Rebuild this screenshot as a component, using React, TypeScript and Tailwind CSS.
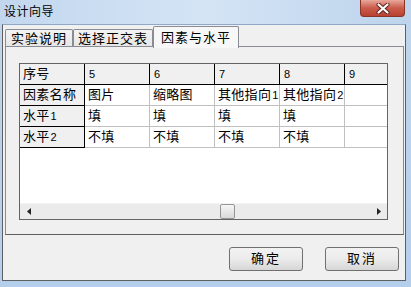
import React from "react"

const cjk = "font-['Liberation_Sans','Noto_Sans_CJK_SC',sans-serif]"

const cols = ["5", "6", "7", "8", "9"]
const rows = [
  { head: "因素名称", cells: ["图片", "缩略图", "其他指向1", "其他指向2", ""] },
  { head: "水平1", cells: ["填", "填", "填", "填", ""] },
  { head: "水平2", cells: ["不填", "不填", "不填", "不填", ""] },
]

// digits are drawn in a smaller face than the CJK glyphs
function Txt({ text }: { text: string }) {
  const parts = text.split(/(\d+)/)
  return (
    <>
      {parts.map((p, i) =>
        /^\d+$/.test(p) ? (
          <span key={i} className="text-[11px] ml-[1px]">
            {p}
          </span>
        ) : (
          <span key={i}>{p}</span>
        )
      )}
    </>
  )
}

function Cell({ text, fixed, last }: { text: string; fixed?: boolean; last?: boolean }) {
  return (
    <div
      className={
        "h-[21px] flex items-center pl-[3px] overflow-hidden whitespace-nowrap text-[13px] tracking-[0.3px] text-black " +
        (last ? "w-[42px] " : "w-[65px] border-r ") +
        (fixed ? "bg-[#f0f0f0] border-b border-black " : "bg-white border-b border-[#c0c0c0] ") +
        (fixed ? "border-r-black" : "border-r-[#c0c0c0]")
      }
    >
      <Txt text={text} />
    </div>
  )
}

function Tab({ label, selected, w }: { label: string; selected?: boolean; w: string }) {
  return (
    <div
      className={
        "flex items-center justify-center border border-b-0 border-[#898c95] text-[13px] tracking-[1px] text-black " +
        w +
        (selected
          ? " h-[22px] mt-[1px] bg-[#f7f7f7] rounded-t-[2px] z-10 -mb-px"
          : " h-[18px] mt-[4px] bg-gradient-to-b from-[#f3f3f3] to-[#e6e6e6] rounded-t-[2px]")
      }
    >
      {label}
    </div>
  )
}

function Button({ label }: { label: string }) {
  return (
    <button className="w-[74px] h-[24px] rounded-[3px] border border-[#707070] bg-gradient-to-b from-[#f2f2f2] via-[#ebebeb] to-[#d6d6d6] text-[13px] tracking-[2px] text-black">
      {label}
    </button>
  )
}

export default function App() {
  return (
    <div className={"w-[411px] h-[287px] flex flex-col bg-gradient-to-b from-[#c0d6ee] to-[#b4cfec] " + cjk}>
      {/* title bar */}
      <div className="h-[24px] flex items-start justify-between bg-gradient-to-r from-[#c2d7ee] via-[#d4e4f5] to-[#bdd4ec]">
        <span className="mt-[5px] ml-[4px] text-[12px] tracking-[0.5px] text-black leading-[14px]">设计向导</span>
        <div className="mr-[6px] w-[45px] h-[17px] rounded-b-[4px] border border-t-0 border-[#8a3428] bg-gradient-to-b from-[#e8a89c] via-[#c95b4b] to-[#b84130] flex items-center justify-center">
          <svg width="14" height="11" viewBox="0 0 14 11">
            <path d="M2.5 1.5 L11.5 9.5 M11.5 1.5 L2.5 9.5" stroke="#5a2019" strokeWidth="4" strokeLinecap="round" />
            <path d="M2.5 1.5 L11.5 9.5 M11.5 1.5 L2.5 9.5" stroke="#ffffff" strokeWidth="2.2" strokeLinecap="round" />
          </svg>
        </div>
      </div>

      {/* client area */}
      <div className="ml-[2px] w-[404px] h-[257px] flex flex-col bg-[#f0f0f0] border border-t-[#8ea9c8] border-[#5f5f5f]">
        {/* tab strip */}
        <div className="h-[21px] flex pl-[2px]">
          <Tab label="实验说明" w="w-[68px]" />
          <Tab label="选择正交表" w="w-[80px]" />
          <Tab label="因素与水平" w="w-[86px]" selected />
        </div>

        {/* tab page */}
        <div className="ml-[2px] w-[399px] h-[189px] border border-[#898c95] border-b-[#5f5f5f] bg-[#f0f0f0] pl-[13px] pt-[16px]">
          <div className="w-[369px] h-[157px] border border-[#646464] bg-white flex flex-col">
            <div className="flex">
              <Cell text="序号" fixed />
              {cols.map((c, i) => (
                <Cell key={c} text={c} fixed last={i === cols.length - 1} />
              ))}
            </div>
            {rows.map((r) => (
              <div key={r.head} className="flex">
                <Cell text={r.head} fixed />
                {r.cells.map((c, i) => (
                  <Cell key={i} text={c} last={i === r.cells.length - 1} />
                ))}
              </div>
            ))}
            <div className="flex-1" />
            {/* horizontal scrollbar */}
            <div className="h-[16px] flex items-center bg-[#ebebeb] border-t border-t-[#f4f4f4]">
              <div className="w-[17px] flex items-center justify-center">
                <svg width="4" height="7" viewBox="0 0 4 7">
                  <path d="M4 0 L0 3.5 L4 7 Z" fill="#222" />
                </svg>
              </div>
              <div className="flex-1 flex items-center">
                <div className="ml-[183px] w-[15px] h-[15px] rounded-[2px] border border-[#959595] bg-gradient-to-b from-[#f6f6f6] to-[#d9d9d9]" />
              </div>
              <div className="w-[17px] flex items-center justify-center">
                <svg width="4" height="7" viewBox="0 0 4 7">
                  <path d="M0 0 L4 3.5 L0 7 Z" fill="#222" />
                </svg>
              </div>
            </div>
          </div>
        </div>

        {/* buttons */}
        <div className="flex justify-end gap-[22px] pr-[6px] pt-[12px]">
          <Button label="确定" />
          <Button label="取消" />
        </div>
      </div>
    </div>
  )
}
